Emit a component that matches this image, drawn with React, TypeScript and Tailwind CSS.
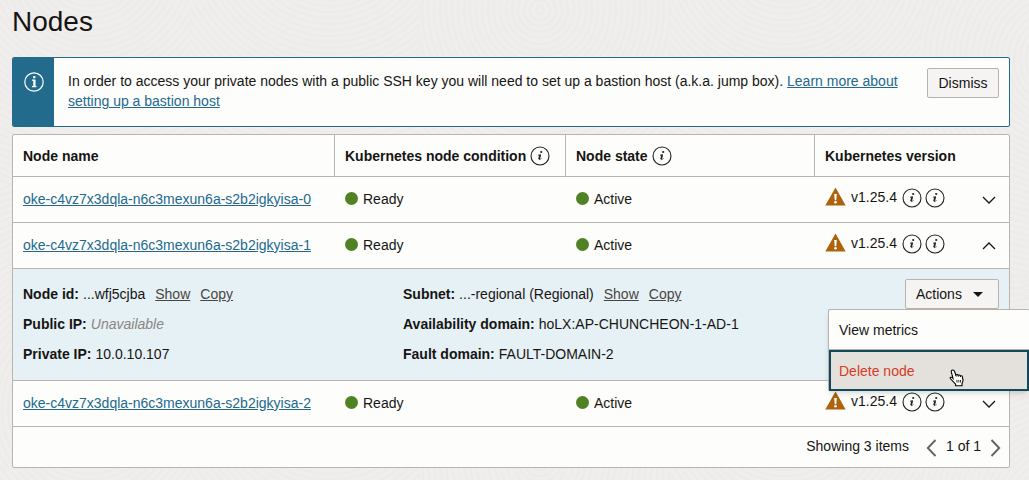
import React, { Fragment, useState } from "react";

const nodes = [
  { name: "oke-c4vz7x3dqla-n6c3mexun6a-s2b2igkyisa-0" },
  { name: "oke-c4vz7x3dqla-n6c3mexun6a-s2b2igkyisa-1" },
  { name: "oke-c4vz7x3dqla-n6c3mexun6a-s2b2igkyisa-2" },
];

const ringCenters = [
  { x: 0, w: 190, cx: 90, cy: -40 },
  { x: 190, w: 230, cx: 330, cy: -70 },
  { x: 420, w: 250, cx: 540, cy: 10 },
  { x: 670, w: 250, cx: 785, cy: -50 },
  { x: 920, w: 400, cx: 1060, cy: 60 },
];

function Rings({ id }: { id: string }) {
  const radii = Array.from({ length: 60 }, (_, i) => 4 + i * 6);
  return (
    <svg
      aria-hidden="true"
      className="pointer-events-none absolute inset-0 h-full w-full"
      fill="none"
      stroke="#ecebe9"
      strokeWidth="2"
    >
      {ringCenters.map((c, n) => (
        <Fragment key={n}>
          <clipPath id={`${id}-${n}`}>
            <rect x={c.x} y="0" width={c.w} height="2000" />
          </clipPath>
          <g clipPath={`url(#${id}-${n})`}>
            {[0, 450].map((dy) => (
              <Fragment key={dy}>
                {radii
                  .filter((r) => r < 240)
                  .map((r) => (
                    <circle key={r} cx={c.cx} cy={c.cy + dy} r={r} />
                  ))}
              </Fragment>
            ))}
          </g>
        </Fragment>
      ))}
    </svg>
  );
}

function InfoButton({ label }: { label: string }) {
  return (
    <button type="button" aria-label={label} className="shrink-0">
      <svg width="20" height="20" viewBox="0 0 20 20" fill="none" stroke="#242220">
        <circle cx="10" cy="10" r="9" strokeWidth="1.1" />
        <circle cx="11.2" cy="6" r="1.1" fill="#242220" stroke="none" />
        <path d="M8 9.300c1-.2 1.700-.5 2.500-.7L9.300 13c-.2.9.9.7 2-.6" strokeWidth=".9" />
        <path d="M10.100 9 9 13.200" strokeWidth="1.600" />
      </svg>
    </button>
  );
}

function WarningIcon() {
  return (
    <svg width="21" height="19" viewBox="0 0 21 19" role="img" aria-label="Warning" className="shrink-0">
      <path d="M10.500 0.500 20.700 18.500H.3z" fill="#ac630c" />
      <path d="M9.200 7h2.600l-.5 6.200H9.700z" fill="#fff" />
      <circle cx="10.500" cy="15.300" r="1.300" fill="#fff" />
    </svg>
  );
}

function Status({ text }: { text: string }) {
  return (
    <span className="flex items-center gap-[5px]">
      <span className="size-[13px] rounded-full bg-[#508223]" />
      {text}
    </span>
  );
}

function Reveal() {
  return (
    <span className="ml-2.5 inline-flex gap-2.5 text-[#494542]">
      <button type="button" className="underline">Show</button>
      <button type="button" className="underline">Copy</button>
    </span>
  );
}

function Detail({ label, children }: { label: string; children: React.ReactNode }) {
  return (
    <div className="flex gap-1">
      <dt className="font-bold">{label}</dt>
      <dd>{children}</dd>
    </div>
  );
}

function HandCursor() {
  return (
    <svg
      aria-hidden="true"
      width="15"
      height="18"
      viewBox="0 0 15 18"
      className="pointer-events-none absolute top-[17px] left-[118px]"
    >
      <path
        d="M3.500 1C4.600.8 5.200 1.500 5.500 2.300L6.800 6c.8-.8 1.900-.5 2.300.3.800-.6 1.800-.3 2.200.6.900-.4 1.800 0 2.100.9l.6 3c.2 1.400-.8 2.700-1 3.900v2H6.600v-1.500C5.300 14 4.400 12.600 3.300 11.600 2.300 10.500 1 9.900 1.100 8.900c.2-.9 1.700-.8 2.900.4L2.300 2.900C2 2 2.600 1.200 3.500 1z"
        fill="#fff"
        stroke="#000"
        strokeWidth="1.1"
      />
      <path d="M6.800 6l.4 1.600M9.100 6.400l.3 1.400M11.300 7l.3 1.200M7.800 11l.3 2.500M9.700 11l.2 2.500M11.500 11v2.500" fill="none" stroke="#000" strokeWidth=".8" />
    </svg>
  );
}

function ActionsMenu() {
  return (
    <div className="relative">
      <button
        type="button"
        aria-haspopup="menu"
        aria-expanded="true"
        className="flex h-[30px] min-w-[94px] items-center justify-between rounded-xs border border-[#b9b3ac] bg-[#f5f4f2] pr-[15px] pl-2.5"
      >
        Actions
        <svg width="10" height="5" viewBox="0 0 10 5" aria-hidden="true">
          <path d="M0 0h10L5 5z" fill="#161513" />
        </svg>
      </button>
      <div
        role="menu"
        className="absolute top-full right-[-30px] z-10 w-[201px] rounded-xs border border-r-0 border-b-0 border-[#b9b3ac] bg-[#fdfdfb] shadow-md"
      >
        <button type="button" role="menuitem" className="block h-10 w-full border-b border-[#b9b3ac] px-2.5 text-left">
          View metrics
        </button>
        <button
          type="button"
          role="menuitem"
          className="relative block h-[41px] w-full border-2 border-[#13475b] bg-[#e4e1dd] px-2 text-left text-[#d63b25]"
        >
          Delete node
          <HandCursor />
        </button>
      </div>
    </div>
  );
}

export default function App() {
  const [open, setOpen] = useState(1);
  const head = "h-[42px] border-b border-[#bab4ad] px-2.5 text-left font-bold";
  const cell = "h-[46px] border-b border-[#bab4ad] px-2.5";
  return (
    <main className="relative min-h-screen overflow-x-clip bg-[#f0eeec] pr-[19px] pb-3 pl-3 font-['Liberation_Sans',Arial,sans-serif] text-[14px] leading-5 text-[#161513]">
      <Rings id="rings" />
      <div className="relative">
        <h1 className="pt-1 pb-[17px] text-[28px] leading-9">Nodes</h1>

        <section className="flex min-h-[70px] overflow-hidden rounded-xs border border-[#226b8d] bg-[#fdfdfb]">
          <div className="flex w-[41px] shrink-0 justify-center bg-[#226b8d] pt-3.5">
            <svg width="20" height="20" viewBox="0 0 20 20" fill="none" stroke="#fff" role="img" aria-label="Information">
              <circle cx="10" cy="10" r="9.200" strokeWidth="1.2" />
              <path d="M8 8.200h2.600v6.300M8 14.700h4.400" strokeWidth="1.300" />
              <path d="M10.300 8v6.500" strokeWidth="2.200" />
              <path d="M9.200 5.200h2.200" strokeWidth="2.200" />
            </svg>
          </div>
          <p className="min-w-0 grow pt-[13px] pb-[15px] pl-3.5">
            In order to access your private nodes with a public SSH key you will need to set up a bastion host (a.k.a.
            jump box).{" "}
            <a href="#bastion" className="text-[#22698d] underline">
              Learn more about setting up a bastion host
            </a>
          </p>
          <button
            type="button"
            className="mt-2.5 mr-2.5 ml-3.5 h-[30px] min-w-[72px] shrink-0 rounded-xs border border-[#b9b3ac] bg-[#f5f4f2] px-2.5"
          >
            Dismiss
          </button>
        </section>

        <div className="mt-[7px] rounded-xs border border-[#bab4ad] bg-[#fdfdfb]">
          <table className="w-full table-fixed border-separate border-spacing-0">
            <colgroup>
              <col className="w-[322px]" />
              <col className="w-[231px]" />
              <col className="w-[249px]" />
              <col />
            </colgroup>
            <thead>
              <tr>
                <th scope="col" className={`${head} border-r`}>Node name</th>
                <th scope="col" className={`${head} border-r`}>
                  <span className="flex items-center gap-1">
                    Kubernetes node condition <InfoButton label="About node condition" />
                  </span>
                </th>
                <th scope="col" className={`${head} border-r`}>
                  <span className="flex items-center gap-1">
                    Node state <InfoButton label="About node state" />
                  </span>
                </th>
                <th scope="col" className={head}>Kubernetes version</th>
              </tr>
            </thead>
            <tbody>
              {nodes.map((node, i) => (
                <Fragment key={node.name}>
                  <tr>
                    <td className={`${cell} pb-0.5`}>
                      <a href={`#node-${i}`} className="text-[#22698d] underline">{node.name}</a>
                    </td>
                    <td className={`${cell} pb-0.5`}><Status text="Ready" /></td>
                    <td className={`${cell} pb-0.5`}><Status text="Active" /></td>
                    <td className={cell}>
                      <div className="flex items-center justify-between">
                        <div className="flex items-center pb-1.5">
                          <WarningIcon />
                          <span className="mx-[5px]">v1.25.4</span>
                          <span className="flex gap-[3px] pt-0.5">
                            <InfoButton label="Upgrade details" />
                            <InfoButton label="Version details" />
                          </span>
                        </div>
                        <button
                          type="button"
                          aria-label="Toggle details"
                          aria-expanded={open === i}
                          className="px-[3px]"
                          onClick={() => setOpen(open === i ? -1 : i)}
                        >
                          <svg width="14" height="8" viewBox="0 0 14 8" fill="none" stroke="#161513" strokeWidth="1.300">
                            <path d={open === i ? "M1 7l6-6 6 6" : "M1 1l6 6 6-6"} />
                          </svg>
                        </button>
                      </div>
                    </td>
                  </tr>
                  {open === i && (
                    <tr>
                      <td colSpan={4} className="border-b border-[#bab4ad] bg-[#e6f1f5] px-2.5 pt-2.5 pb-4 align-top">
                        <div className="flex items-start">
                          <dl className="flex w-[380px] flex-col gap-2.5 pt-[5px]">
                            <Detail label="Node id:">...wfj5cjba<Reveal /></Detail>
                            <Detail label="Public IP:"><i className="text-[#8b8580]">Unavailable</i></Detail>
                            <Detail label="Private IP:">10.0.10.107</Detail>
                          </dl>
                          <dl className="flex grow flex-col gap-2.5 pt-[5px]">
                            <Detail label="Subnet:">...-regional (Regional)<Reveal /></Detail>
                            <Detail label="Availability domain:">hoLX:AP-CHUNCHEON-1-AD-1</Detail>
                            <Detail label="Fault domain:">FAULT-DOMAIN-2</Detail>
                          </dl>
                          <ActionsMenu />
                        </div>
                      </td>
                    </tr>
                  )}
                </Fragment>
              ))}
            </tbody>
          </table>
          <nav aria-label="Pagination" className="flex h-10 items-center justify-end pr-2 pb-0.5">
            <span className="mr-[17px]">Showing 3 items</span>
            <button type="button" aria-label="Previous page" className="pt-1">
              <svg width="11" height="18" viewBox="0 0 11 18" fill="none" stroke="#68625e" strokeWidth="1.900">
                <path d="M9.500 1 1.800 9l7.700 8" />
              </svg>
            </button>
            <span className="mx-[9px]">1 of 1</span>
            <button type="button" aria-label="Next page" className="pt-1">
              <svg width="11" height="18" viewBox="0 0 11 18" fill="none" stroke="#68625e" strokeWidth="1.900">
                <path d="M1.500 1 9.200 9l-7.700 8" />
              </svg>
            </button>
          </nav>
        </div>
      </div>
    </main>
  );
}
